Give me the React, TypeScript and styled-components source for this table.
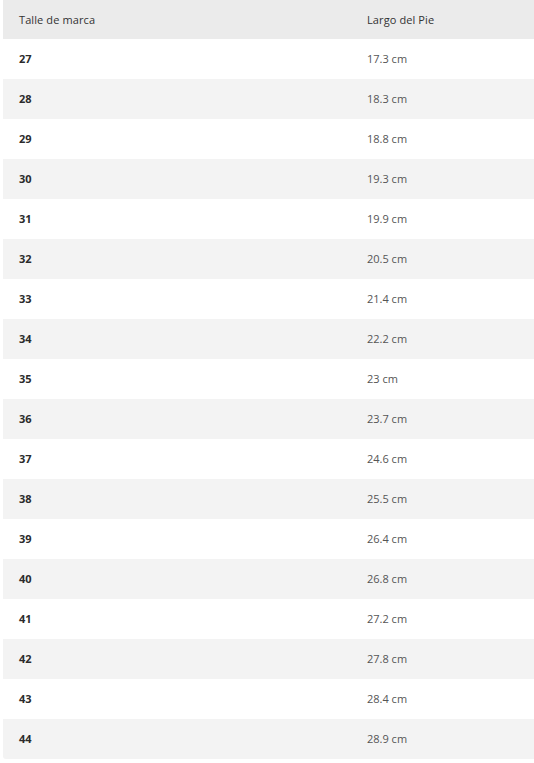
import React from "react";
import styled, { createGlobalStyle } from "styled-components";

const Global = createGlobalStyle`
  html, body { margin: 0; padding: 0; background: #fff; }
  body { font-family: "Open Sans", "Liberation Sans", sans-serif; }
`;

const Wrap = styled.div`
  padding: 0 0 0 3px;
`;

const Table = styled.div`
  display: flex;
  flex-direction: column;
  border-radius: 0 0 0 3px;
  overflow: hidden;
`;

const Row = styled.div<{ $variant: "head" | "odd" | "even" }>`
  display: grid;
  grid-template-columns: 348px 1fr;
  height: ${(p) => (p.$variant === "head" ? "39px" : "40px")};
  box-sizing: border-box;
  padding-bottom: ${(p) => (p.$variant === "head" ? "0" : "2px")};
  align-items: center;
  padding-left: 16px;
  background: ${(p) =>
    p.$variant === "head" ? "#ebebeb" : p.$variant === "even" ? "#f3f3f3" : "#ffffff"};
`;

const HeadCell = styled.div`
  font-size: 11px;
  color: #333;
  font-weight: 500;
  letter-spacing: 0.1px;
`;

const SizeCell = styled.div`
  font-size: 11px;
  font-weight: 700;
  color: #2b2b2b;
`;

const LenCell = styled.div`
  font-size: 11px;
  color: #555;
`;

const data: [string, string][] = [
  ["27", "17.3 cm"],
  ["28", "18.3 cm"],
  ["29", "18.8 cm"],
  ["30", "19.3 cm"],
  ["31", "19.9 cm"],
  ["32", "20.5 cm"],
  ["33", "21.4 cm"],
  ["34", "22.2 cm"],
  ["35", "23 cm"],
  ["36", "23.7 cm"],
  ["37", "24.6 cm"],
  ["38", "25.5 cm"],
  ["39", "26.4 cm"],
  ["40", "26.8 cm"],
  ["41", "27.2 cm"],
  ["42", "27.8 cm"],
  ["43", "28.4 cm"],
  ["44", "28.9 cm"],
];

export default function App() {
  return (
    <>
      <Global />
      <Wrap>
        <Table>
          <Row $variant="head">
            <HeadCell>Talle de marca</HeadCell>
            <HeadCell>Largo del Pie</HeadCell>
          </Row>
          {data.map(([s, l], i) => (
            <Row key={s} $variant={i % 2 === 0 ? "odd" : "even"}>
              <SizeCell>{s}</SizeCell>
              <LenCell>{l}</LenCell>
            </Row>
          ))}
        </Table>
      </Wrap>
    </>
  );
}
